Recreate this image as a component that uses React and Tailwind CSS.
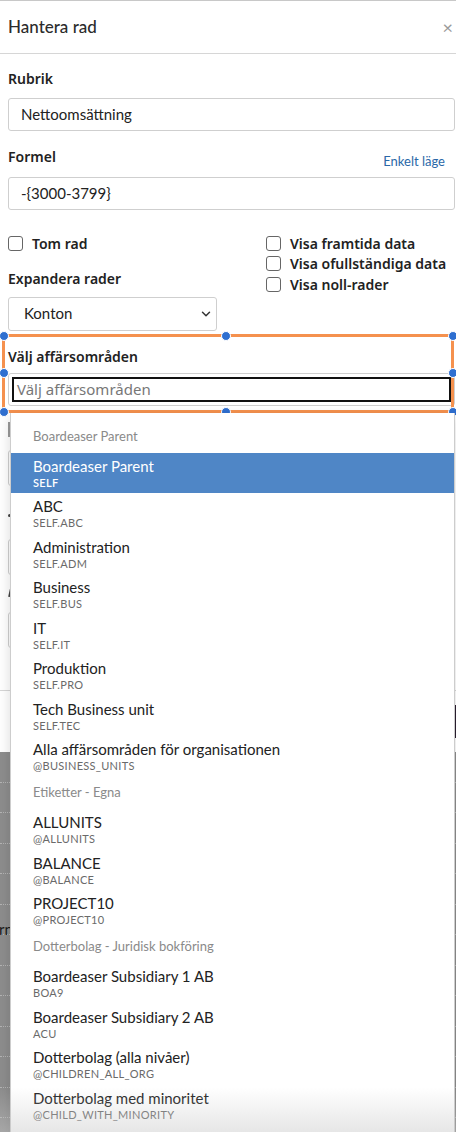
import React from "react";
import { ChevronDown } from "lucide-react";

const LATO = "font-['Lato','Open_Sans',sans-serif]";
const NOTO = "font-['Noto_Sans','Open_Sans',sans-serif]";

const groups = [
  {
    title: "Boardeaser Parent",
    items: [
      ["Boardeaser Parent", "SELF", true],
      ["ABC", "SELF.ABC"],
      ["Administration", "SELF.ADM"],
      ["Business", "SELF.BUS"],
      ["IT", "SELF.IT"],
      ["Produktion", "SELF.PRO"],
      ["Tech Business unit", "SELF.TEC"],
      ["Alla affärsområden för organisationen", "@BUSINESS_UNITS"],
    ],
  },
  {
    title: "Etiketter - Egna",
    items: [
      ["ALLUNITS", "@ALLUNITS"],
      ["BALANCE", "@BALANCE"],
      ["PROJECT10", "@PROJECT10"],
    ],
  },
  {
    title: "Dotterbolag - Juridisk bokföring",
    items: [
      ["Boardeaser Subsidiary 1 AB", "BOA9"],
      ["Boardeaser Subsidiary 2 AB", "ACU"],
      ["Dotterbolag (alla nivåer)", "@CHILDREN_ALL_ORG"],
      ["Dotterbolag med minoritet", "@CHILD_WITH_MINORITY"],
      ["Dotterbolag utan minoritet (alla nivåer)", "@CHILD_NO_MINORITY"],
    ],
  },
];

function Checkbox({ label }) {
  return (
    <div className="flex h-[20.5px] items-center gap-[9px]">
      <span className="block h-[15px] w-[15px] rounded-[3px] border-[1.5px] border-[#666] bg-white" />
      <span className={`${NOTO} text-[14px] font-semibold text-[#222]`}>{label}</span>
    </div>
  );
}

function Handle({ cls }) {
  return (
    <span
      className={`absolute h-[10px] w-[10px] rounded-full border-[1.5px] border-white bg-[#2f6fd0] ${cls}`}
    />
  );
}

export default function App() {
  const rows = Array.from({ length: 13 });
  return (
    <div className="relative h-[1132px] w-[456px] overflow-hidden bg-white">
      {/* Modal */}
      <div className="flex h-[752px] flex-col border-t border-[#c8c8c8] bg-white">
        <div className="flex h-[53px] shrink-0 items-center justify-between border-b border-[#d6d6d6] pl-2 pr-[3px]">
          <span className={`${LATO} text-[17px] font-medium text-[#2b2b2b]`}>Hantera rad</span>
          <span className={`${LATO} text-[18px] leading-none text-[#9a9a9a]`}>×</span>
        </div>

        <div className="flex flex-col pl-2 pr-[1px]">
          <div className={`${NOTO} mt-[15px] h-[20px] text-[14px] font-semibold leading-[20px] text-[#222]`}>Rubrik</div>
          <div className={`${LATO} mt-[9px] flex h-[33px] items-center rounded-[3px] border border-[#cfcfcf] pl-[12px] text-[15px] text-[#222]`}>
            Nettoomsättning
          </div>

          <div className="mt-[16px] flex h-[20px] items-start justify-between pr-[10px]">
            <span className={`${NOTO} text-[14px] font-semibold leading-[20px] text-[#222]`}>Formel</span>
            <span className={`${LATO} mt-[4px] text-[13px] leading-[20px] text-[#2a68a8]`}>Enkelt läge</span>
          </div>
          <div className={`${LATO} mt-[10px] flex h-[33px] items-center rounded-[3px] border border-[#cfcfcf] pl-[12px] text-[15px] text-[#222]`}>
            -{"{"}3000-3799{"}"}
          </div>

          <div className="mt-[23px] flex">
            <div className="flex w-[258px] flex-col">
              <Checkbox label="Tom rad" />
              <div className={`${NOTO} mt-[15px] h-[20px] text-[14px] font-semibold leading-[20px] text-[#222]`}>
                Expandera rader
              </div>
              <div className={`${LATO} mt-[8px] flex h-[34px] w-[209px] items-center justify-between rounded-[3px] border border-[#cfcfcf] pl-[15px] pr-[3px] text-[15px] text-[#222]`}>
                Konton
                <ChevronDown size={14} strokeWidth={2.5} color="#333" />
              </div>
            </div>
            <div className="flex flex-col">
              <Checkbox label="Visa framtida data" />
              <Checkbox label="Visa ofullständiga data" />
              <Checkbox label="Visa noll-rader" />
            </div>
          </div>

          <div className={`${NOTO} mt-[16px] h-[20px] text-[14px] font-semibold leading-[20px] text-[#222]`}>
            Välj affärsområden
          </div>
          <div className="mt-[6px] h-[33px] rounded-[3px] border border-[#cfcfcf] p-[3px]">
            <div className={`${NOTO} flex h-[25px] items-center border-2 border-[#111] pl-[3px] text-[15px] text-[#777]`}>
              Välj affärsområden
            </div>
          </div>

          {/* fields hidden behind the dropdown; only their left edges peek out */}
          <span className="mt-[16px] block h-[15px] w-[10px] bg-[#9a9a9a]" />
          <div className="mt-[13px] h-[36px] rounded-[3px] border border-[#cfcfcf]" />
          <span className="mt-[28px] block h-[3px] w-[3px] rounded-full bg-[#444]" />
          <div className="mt-[22px] h-[36px] rounded-[3px] border border-[#cfcfcf]" />
          <span className="mt-[14px] ml-[1px] block h-[8px] w-[2px] rotate-12 bg-[#444]" />
          <div className="mt-[15px] h-[36px] rounded-[3px] border border-[#cfcfcf]" />
        </div>

        <div className="mt-[42px] flex flex-1 items-start justify-end border-t border-[#d6d6d6] pt-[14px]">
          <div className="h-[33px] w-[80px] rounded-l-[3px] bg-[#2a1f30]" />
        </div>
      </div>

      {/* Dimmed page below modal */}
      <div className="bg-[#8d8d8d]">
        {rows.map((_, i) => (
          <div
            key={i}
            className={`${LATO} flex h-[30.5px] items-center border-b border-dotted border-[#b4b4b4] text-[15px] text-[#1a1a1a]`}
          >
            {i === 5 ? <span className="-ml-[1px] mt-[20px]">rn</span> : null}
          </div>
        ))}
      </div>

      {/* Selection frame overlay */}
      <div className="absolute left-[2px] top-[334px] h-[79px] w-[452px] border-[3px] border-[#f5914e]">
        <Handle cls="-left-[6.5px] -top-[6.5px]" />
        <Handle cls="left-[216px] -top-[6.5px]" />
        <Handle cls="-right-[6.5px] -top-[6.5px]" />
        <Handle cls="-left-[6.5px] top-[31px]" />
        <Handle cls="-right-[6.5px] top-[31px]" />
        <Handle cls="-left-[6.5px] -bottom-[6.5px]" />
        <Handle cls="left-[216px] -bottom-[6.5px]" />
        <Handle cls="-right-[6.5px] -bottom-[6.5px]" />
      </div>

      {/* Dropdown menu */}
      <div className="absolute left-[10px] top-[413px] w-[445px] border-x border-[#cdcdcd] bg-white pt-[7px] shadow-[0_4px_12px_rgba(0,0,0,0.15)]">
        {groups.map((g) => (
          <div key={g.title}>
            <div className={`${LATO} flex h-[32.5px] items-center pl-[22px] text-[13px] text-[#8a8a8a]`}>{g.title}</div>
            {g.items.map(([title, sub, sel]) => (
              <div
                key={title}
                className={`flex h-[40.5px] flex-col pl-[22px] pt-[4px] ${sel ? "bg-[#4f86c6] text-white" : "text-[#222]"}`}
              >
                <span className={`${LATO} text-[15px] leading-[18px]`}>{title}</span>
                <span
                  className={`${LATO} mt-[1px] text-[11px] leading-[14px] tracking-[0.3px] ${sel ? "font-semibold text-white" : "text-[#6a6a6a]"}`}
                >
                  {sub}
                </span>
              </div>
            ))}
          </div>
        ))}
      </div>

      {/* bottom fade */}
      <div className="pointer-events-none absolute bottom-0 left-0 h-[45px] w-full bg-gradient-to-b from-transparent to-[rgba(200,200,200,0.45)]" />
    </div>
  );
}
